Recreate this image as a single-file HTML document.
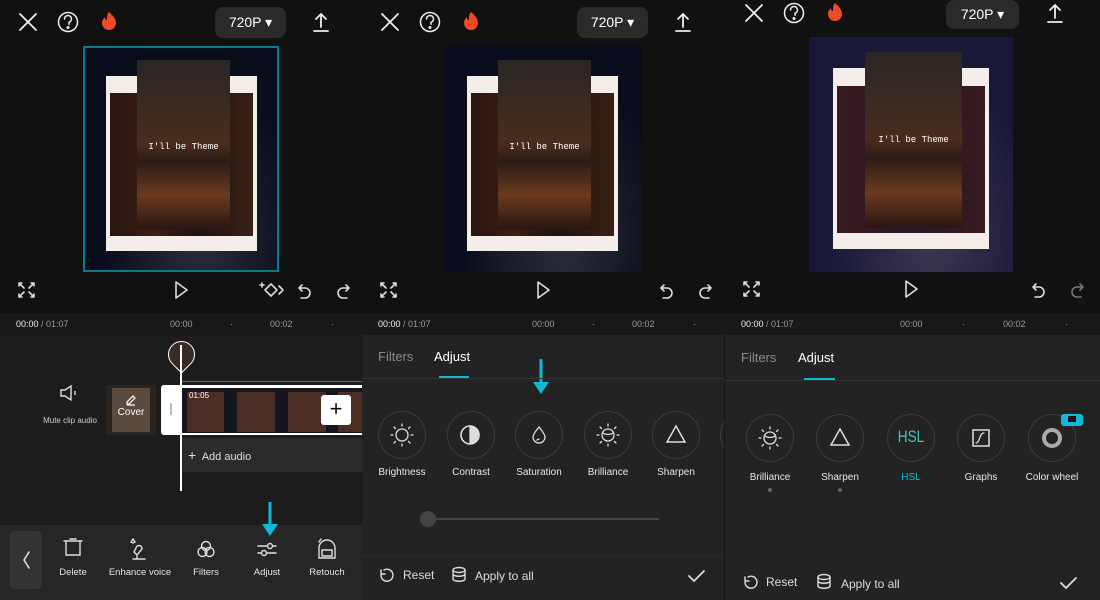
<!DOCTYPE html>
<html><head><meta charset="utf-8"><style>
*{margin:0;padding:0;box-sizing:border-box}
body{width:1100px;height:600px;background:#111;position:relative;overflow:hidden;font-family:"Liberation Sans",sans-serif;color:#e8e8e8}
.a{position:absolute}
.vid{position:absolute;overflow:hidden}
.card{position:absolute;background:#f3eeea}
.photo{position:absolute;background:linear-gradient(90deg,#2a1510,#3a1e12 30%,#1e1410 60%,#3a2015);}
.ov{position:absolute;background:linear-gradient(180deg,#2a2624 0%,#3b2a22 30%,#4a2c1e 50%,#2a1c18 60%,#6a3a1e 80%,#2a1612 100%)}
.ov span{position:absolute;left:0;right:0;text-align:center;color:#fff;font-family:"Liberation Mono",monospace;font-size:9px}
.pill{position:absolute;background:#2a2a2a;border-radius:8px;color:#fff;font-size:14px;text-align:center}
.t{position:absolute;font-size:9px;color:#9a9a9a}
.lbl{position:absolute;font-size:10px;color:#e6e6e6;text-align:center;width:80px}
.circ{position:absolute;width:48px;height:48px;border:1px solid #3c3c3c;border-radius:50%}
svg{position:absolute;overflow:visible}
</style></head><body>

<div class="a" style="left:0;top:313px;width:362px;height:212px;background:#1c1c1c"></div>
<div class="a" style="left:0;top:313px;width:362px;height:22px;background:#181818"></div>
<div class="a" style="left:0;top:525px;width:362px;height:75px;background:#262626"></div>
<div class="a" style="left:362px;top:313px;width:362px;height:22px;background:#181818"></div>
<div class="a" style="left:362px;top:335px;width:362px;height:265px;background:#232323"></div>
<div class="a" style="left:724px;top:313px;width:376px;height:22px;background:#181818"></div>
<div class="a" style="left:724px;top:335px;width:376px;height:265px;background:#232323"></div>

<svg width="1100" height="40" style="left:0;top:0" fill="none" stroke="#eee" stroke-width="1.8" stroke-linecap="round">
 <g><path d="M20 14l16 16M36 14L20 30"/><circle cx="68" cy="22" r="9.5" stroke-width="1.5"/><path d="M64.5 19a3.5 3.5 0 1 1 4.5 3.3v2" stroke-width="1.5"/><circle cx="68" cy="27.5" r=".6" fill="#eee"/>
 <path d="M109 12c3 3 7 6 7 11a7 7 0 0 1-14 0c0-3 2-5 3-6 0 2 1 3 2 3 0-3 0-6 2-8z" fill="#ee4a2a" stroke="none"/>
 <path d="M321 14v13M316 19l5-5 5 5M314 31h14"/></g>
 <g transform="translate(362,0)"><path d="M20 14l16 16M36 14L20 30"/><circle cx="68" cy="22" r="9.5" stroke-width="1.5"/><path d="M64.5 19a3.5 3.5 0 1 1 4.5 3.3v2" stroke-width="1.5"/><circle cx="68" cy="27.5" r=".6" fill="#eee"/>
 <path d="M109 12c3 3 7 6 7 11a7 7 0 0 1-14 0c0-3 2-5 3-6 0 2 1 3 2 3 0-3 0-6 2-8z" fill="#ee4a2a" stroke="none"/>
 <path d="M321 14v13M316 19l5-5 5 5M314 31h14"/></g>
 <g transform="translate(726,-9)"><path d="M20 14l16 16M36 14L20 30"/><circle cx="68" cy="22" r="9.5" stroke-width="1.5"/><path d="M64.5 19a3.5 3.5 0 1 1 4.5 3.3v2" stroke-width="1.5"/><circle cx="68" cy="27.5" r=".6" fill="#eee"/>
 <path d="M109 12c3 3 7 6 7 11a7 7 0 0 1-14 0c0-3 2-5 3-6 0 2 1 3 2 3 0-3 0-6 2-8z" fill="#ee4a2a" stroke="none"/>
 <path d="M329 14v13M324 19l5-5 5 5M322 31h14"/></g>
</svg>
<div class="pill" style="left:215px;top:7px;width:71px;height:31px;line-height:31px">720P ▾</div>
<div class="pill" style="left:577px;top:7px;width:71px;height:31px;line-height:31px">720P ▾</div>
<div class="pill" style="left:946px;top:0;width:73px;height:29px;line-height:29px">720P ▾</div>

<div class="vid" style="left:83px;top:46px;width:196px;height:226px;background:radial-gradient(ellipse at 60% 85%,#2a2e3a,#0a0e1c 60%);border:2px solid #0e7889">
 <div class="card" style="left:21px;top:28px;width:151px;height:175px"><div class="photo" style="left:4px;top:17px;width:143px;height:143px"></div></div>
 <div class="ov" style="left:52px;top:12px;width:93px;height:169px"><span style="top:82px">I'll be Theme</span></div>
</div>
<div class="vid" style="left:444px;top:46px;width:198px;height:226px;background:radial-gradient(ellipse at 60% 85%,#2a2e3a,#0a0e1c 60%)">
 <div class="card" style="left:23px;top:30px;width:151px;height:175px"><div class="photo" style="left:4px;top:17px;width:143px;height:143px"></div></div>
 <div class="ov" style="left:54px;top:14px;width:93px;height:169px"><span style="top:82px">I'll be Theme</span></div>
</div>
<div class="vid" style="left:809px;top:37px;width:204px;height:235px;background:radial-gradient(ellipse at 60% 85%,#3a3850,#1a1838 60%)">
 <div class="card" style="left:24px;top:31px;width:156px;height:181px"><div class="photo" style="left:4px;top:18px;width:148px;height:147px;background:linear-gradient(90deg,#3a1a20,#2a1828 40%,#2a1828 60%,#3a1a20)"></div></div>
 <div class="ov" style="left:56px;top:15px;width:97px;height:176px"><span style="top:83px">I'll be Theme</span></div>
</div>

<svg width="1100" height="20" style="left:0;top:280px" fill="none" stroke="#ddd" stroke-width="1.6" stroke-linecap="round" stroke-linejoin="round">
 <path d="M19 6V3h3M31 3h3v3M19 14v3h3M31 17h3v-3M20 4l4 4M33 4l-4 4M20 16l4-4M33 16l-4-4"/>
 <path d="M176 2l11 8-11 8z"/>
 <path d="M265 10l6-6 6 6-6 6zM262 3v4M260 5h4M279 6l4 4-4 4"/>
 <path d="M302 5l-3 3 3 3M299 8h6a5 5 0 0 1 0 10h-4"/>
 <path d="M346 5l3 3-3 3M349 8h-6a5 5 0 0 0 0 10h4"/>
 <g transform="translate(362,0)"><path d="M19 6V3h3M31 3h3v3M19 14v3h3M31 17h3v-3M20 4l4 4M33 4l-4 4M20 16l4-4M33 16l-4-4"/><path d="M176 2l11 8-11 8z"/>
 <path d="M302 5l-3 3 3 3M299 8h6a5 5 0 0 1 0 10h-4"/><path d="M346 5l3 3-3 3M349 8h-6a5 5 0 0 0 0 10h4"/></g>
 <g transform="translate(725,-1)"><path d="M19 6V3h3M31 3h3v3M19 14v3h3M31 17h3v-3M20 4l4 4M33 4l-4 4M20 16l4-4M33 16l-4-4"/><path d="M181 2l11 8-11 8z"/>
 <path d="M311 5l-3 3 3 3M308 8h6a5 5 0 0 1 0 10h-4"/><path d="M355 5l3 3-3 3M358 8h-6a5 5 0 0 0 0 10h4" stroke="#777"/></g>
</svg>

<div class="t" style="left:16px;top:319px"><span style="color:#eee">00:00</span> / 01:07</div>
<div class="t" style="left:170px;top:319px">00:00</div><div class="t" style="left:230px;top:319px">·</div><div class="t" style="left:270px;top:319px">00:02</div><div class="t" style="left:331px;top:319px">·</div>
<div class="t" style="left:378px;top:319px"><span style="color:#eee">00:00</span> / 01:07</div>
<div class="t" style="left:532px;top:319px">00:00</div><div class="t" style="left:592px;top:319px">·</div><div class="t" style="left:632px;top:319px">00:02</div><div class="t" style="left:693px;top:319px">·</div>
<div class="t" style="left:741px;top:319px"><span style="color:#eee">00:00</span> / 01:07</div>
<div class="t" style="left:900px;top:319px">00:00</div><div class="t" style="left:962px;top:319px">·</div><div class="t" style="left:1003px;top:319px">00:02</div><div class="t" style="left:1065px;top:319px">·</div>

<svg width="30" height="30" style="left:58px;top:384px" fill="none" stroke="#ddd" stroke-width="1.4"><path d="M3 6h4l6-4v14l-6-4H3z"/><path d="M17 7v4"/></svg>
<div class="a" style="left:30px;top:416px;width:80px;text-align:center;font-size:8px;color:#ccc">Mute clip audio</div>
<div class="a" style="left:106px;top:385px;width:50px;height:50px;background:#2a2420"><div class="a" style="left:6px;top:3px;width:38px;height:44px;background:#5a4a40"></div>
 <div class="a" style="left:0;top:22px;width:50px;text-align:center;font-size:10px;color:#fff">Cover</div>
 <svg width="12" height="12" style="left:19px;top:8px" fill="none" stroke="#fff" stroke-width="1.2"><path d="M2 9l6-6 2 2-6 6H2zM2 12h8"/></svg></div>
<div class="a" style="left:161px;top:385px;width:201px;height:50px;background:#fff;border-radius:3px 0 0 3px"></div>
<div class="a" style="left:170px;top:403px;width:2px;height:12px;background:#bbb"></div>
<div class="a" style="left:182px;top:381px;width:180px;height:1px;background:#d33a4a"></div>
<div class="a" style="left:182px;top:388px;width:180px;height:45px;background:#151520"></div>
<div class="a" style="left:187px;top:392px;width:37px;height:40px;background:#4a2e24"></div>
<div class="a" style="left:189px;top:391px;font-size:8px;color:#fff">01:05</div>
<div class="a" style="left:237px;top:392px;width:38px;height:40px;background:#4a2e24"></div>
<div class="a" style="left:288px;top:392px;width:38px;height:40px;background:#4a2e24"></div>
<div class="a" style="left:338px;top:392px;width:24px;height:40px;background:#4a2e24"></div>
<div class="a" style="left:321px;top:395px;width:30px;height:30px;background:#fff;border-radius:3px;color:#111;font-size:22px;line-height:28px;text-align:center">+</div>
<div class="a" style="left:182px;top:438px;width:180px;height:34px;background:#2b2b2b;font-size:11px;color:#ddd;line-height:34px;padding-left:6px"><span style="font-size:14px">+</span>&nbsp; Add audio</div>
<div class="a" style="left:168px;top:341px;width:27px;height:27px;border-radius:50% 50% 50% 0;transform:rotate(-45deg);border:1.5px solid #fff;background:#3a2a24"></div>
<div class="a" style="left:180px;top:345px;width:2px;height:146px;background:#fff"></div>

<svg width="1100" height="600" style="left:0;top:0" fill="#12b9d4" stroke="#12b9d4">
 <path d="M270 502v24" stroke-width="3"/><path d="M262 524h16l-8 12z" stroke="none"/>
 <path d="M541 359v24" stroke-width="3"/><path d="M533 382h16l-8 12z" stroke="none"/>
</svg>

<div class="a" style="left:10px;top:531px;width:32px;height:58px;background:#343434;border-radius:4px"></div>
<svg width="362" height="70" style="left:0;top:530px" fill="none" stroke="#ddd" stroke-width="1.4" stroke-linecap="round">
 <path d="M29 22l-5 8 5 8" stroke-width="1.6"/>
 <path d="M64 11h18M66 11v14h14V11M70 9h6"/>
 <path d="M131 12l2-3 2 3-2 1zM136 18a3 3 0 1 1 6 1l-5 6-3-3zM137 25v4h8M133 29h10"/>
 <circle cx="206" cy="16" r="4.5"/><circle cx="202.5" cy="22" r="4.5"/><circle cx="209.5" cy="22" r="4.5"/>
 <path d="M258 16h18M258 23h18"/><circle cx="270" cy="16" r="2.5" fill="#262626"/><circle cx="264" cy="23" r="2.5" fill="#262626"/>
 <path d="M319 28V18a8 8 0 0 1 16 0v10zM322 20h10v6h-10zM319 12l2-3"/>
</svg>
<div class="lbl" style="left:33px;top:567px;font-size:9.5px">Delete</div>
<div class="lbl" style="left:100px;top:567px;font-size:9.5px">Enhance voice</div>
<div class="lbl" style="left:166px;top:567px;font-size:9.5px">Filters</div>
<div class="lbl" style="left:227px;top:567px;font-size:9.5px">Adjust</div>
<div class="lbl" style="left:287px;top:567px;font-size:9.5px">Retouch</div>

<div class="a" style="left:378px;top:349px;font-size:13px;color:#8a8a8a">Filters</div>
<div class="a" style="left:434px;top:349px;font-size:13px;color:#fff">Adjust</div>
<div class="a" style="left:362px;top:378px;width:362px;height:1px;background:#333"></div>
<div class="a" style="left:439px;top:376px;width:30px;height:2px;background:#12b9d4"></div>
<div class="circ" style="left:378px;top:411px"></div><div class="circ" style="left:447px;top:411px"></div><div class="circ" style="left:515px;top:411px"></div><div class="circ" style="left:584px;top:411px"></div><div class="circ" style="left:652px;top:411px"></div>
<div class="a" style="left:720px;top:411px;width:4px;height:48px;overflow:hidden"><div class="circ" style="left:0;top:0"></div></div>
<div class="a" style="left:724px;top:335px;width:1px;height:265px;background:#161616"></div>
<svg width="362" height="50" style="left:362px;top:410px" fill="none" stroke="#ddd" stroke-width="1.3" stroke-linecap="round">
 <circle cx="40" cy="25" r="6"/><path d="M40 14v2M40 34v2M29 25h2M49 25h2M32 17l1.5 1.5M48 17l-1.5 1.5M32 33l1.5-1.5M48 33l-1.5-1.5"/>
 <circle cx="108" cy="25" r="9" stroke-width="1.6"/><path d="M108 16a9 9 0 0 1 0 18z" fill="#ddd"/>
 <path d="M177 17c3 4 6 7 6 10a6 6 0 0 1-12 0c0-3 3-6 6-10zM175 30l2-1"/>
 <circle cx="246" cy="25" r="6"/><path d="M241 23a7 5 0 0 0 10 0M246 14v2M246 34v2M235 25h2M255 25h2M238 17l1.5 1.5M254 17l-1.5 1.5M238 33l1.5-1.5M254 33l-1.5-1.5"/>
 <path d="M314 16l9 16h-18z" stroke-width="1.5"/>
</svg>
<div class="lbl" style="left:362px;top:467px">Brightness</div>
<div class="lbl" style="left:431px;top:467px">Contrast</div>
<div class="lbl" style="left:499px;top:467px">Saturation</div>
<div class="lbl" style="left:568px;top:467px">Brilliance</div>
<div class="lbl" style="left:636px;top:467px">Sharpen</div>
<div class="a" style="left:428px;top:518px;width:231px;height:2px;background:#444"></div>
<div class="a" style="left:420px;top:511px;width:16px;height:16px;border-radius:50%;background:#444"></div>
<div class="a" style="left:362px;top:555px;width:362px;height:1px;background:#2c2c2c"></div>
<svg width="362" height="30" style="left:362px;top:562px" fill="none" stroke="#ddd" stroke-width="1.4" stroke-linecap="round">
 <path d="M22 8a6 6 0 1 1-3 5M19 8v4h4"/>
 <ellipse cx="97" cy="8" rx="6" ry="2.5"/><path d="M91 8v9c0 3 12 3 12 0V8M91 12c0 3 12 3 12 0"/>
 <path d="M327 14l5 5 10-10" stroke-width="1.8"/>
</svg>
<div class="a" style="left:403px;top:568px;font-size:12px;color:#ddd">Reset</div>
<div class="a" style="left:475px;top:569px;font-size:12px;color:#ddd">Apply to all</div>

<div class="a" style="left:741px;top:350px;font-size:13px;color:#8a8a8a">Filters</div>
<div class="a" style="left:798px;top:350px;font-size:13px;color:#fff">Adjust</div>
<div class="a" style="left:724px;top:380px;width:376px;height:1px;background:#333"></div>
<div class="a" style="left:804px;top:378px;width:31px;height:2px;background:#12b9d4"></div>
<div class="circ" style="left:746px;top:414px"></div><div class="circ" style="left:816px;top:414px"></div><div class="circ" style="left:887px;top:414px"></div><div class="circ" style="left:957px;top:414px"></div><div class="circ" style="left:1028px;top:414px"></div>
<svg width="376" height="50" style="left:724px;top:413px" fill="none" stroke="#ddd" stroke-width="1.3" stroke-linecap="round">
 <circle cx="46" cy="25" r="6"/><path d="M41 23a7 5 0 0 0 10 0M46 14v2M46 34v2M35 25h2M55 25h2M38 17l1.5 1.5M54 17l-1.5 1.5M38 33l1.5-1.5M54 33l-1.5-1.5"/>
 <path d="M116 16l9 16h-18z" stroke-width="1.5"/>
 <rect x="249" y="17" width="16" height="16" stroke-width="1.5"/><path d="M252 30c4 0 3-10 8-10"/>
 <circle cx="328" cy="25" r="8" stroke="#aaa" stroke-width="4" stroke-dasharray="3 1.5"/>
</svg>
<div class="a" style="left:887px;top:427px;width:48px;text-align:center;font-size:17px;color:#3ec8c0;transform:scaleX(.8)">HSL</div>
<div class="a" style="left:1061px;top:414px;width:22px;height:12px;background:#12b9d4;border-radius:3px"><div class="a" style="left:7px;top:2px;width:8px;height:6px;background:#111"></div></div>
<div class="lbl" style="left:730px;top:472px">Brilliance</div>
<div class="lbl" style="left:800px;top:472px">Sharpen</div>
<div class="lbl" style="left:871px;top:472px;color:#12b9d4">HSL</div>
<div class="lbl" style="left:941px;top:472px">Graphs</div>
<div class="lbl" style="left:1012px;top:472px">Color wheel</div>
<div class="a" style="left:768px;top:488px;width:4px;height:4px;border-radius:50%;background:#666"></div>
<div class="a" style="left:838px;top:488px;width:4px;height:4px;border-radius:50%;background:#666"></div>
<svg width="376" height="30" style="left:724px;top:569px" fill="none" stroke="#ddd" stroke-width="1.4" stroke-linecap="round">
 <path d="M24 8a6 6 0 1 1-3 5M21 8v4h4"/>
 <ellipse cx="100" cy="8" rx="6" ry="2.5"/><path d="M94 8v9c0 3 12 3 12 0V8M94 12c0 3 12 3 12 0"/>
 <path d="M337 14l5 5 10-10" stroke-width="1.8"/>
</svg>
<div class="a" style="left:766px;top:575px;font-size:12px;color:#ddd">Reset</div>
<div class="a" style="left:841px;top:577px;font-size:12px;color:#ddd">Apply to all</div>
</body></html>
